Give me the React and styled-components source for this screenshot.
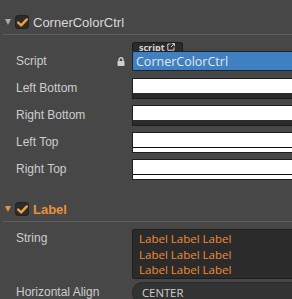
import React from 'react'
import styled, { createGlobalStyle } from 'styled-components'

const Global = createGlobalStyle`
  html, body {
    margin: 0;
    padding: 0;
    overflow: hidden;
    background: #474747;
  }
  body {
    font-family: "Liberation Sans", Arial, sans-serif;
  }
`

const Panel = styled.div`
  width: 100%;
  background: #474747;
`

const Header = styled.div`
  display: flex;
  align-items: center;
  box-sizing: border-box;
  height: 35px;
  padding: 10px 0 0 2px;
  margin-left: 3px;
  border-bottom: 1px solid #5d5d5d;
`

const Arrow = styled.span`
  width: 0;
  height: 0;
  border-left: 3.5px solid transparent;
  border-right: 3.5px solid transparent;
  border-top: 6px solid ${p => (p.$active ? '#e8913a' : '#a9a9a9')};
  margin: 0 4px 0 0;
`

const Check = styled.span`
  width: 14px;
  height: 14px;
  box-sizing: border-box;
  border-radius: 3px;
  background: #2b2b2b;
  border: 1px solid #232323;
  display: flex;
  align-items: center;
  justify-content: center;
`

const Title = styled.span`
  margin-left: 4px;
  font-size: 13px;
  color: ${p => (p.$active ? '#e8913a' : '#d8d8d8')};
  font-weight: ${p => (p.$active ? 'bold' : 'normal')};
`

const Props = styled.div`
  display: flex;
  flex-direction: column;
  padding-bottom: ${p => p.$pb || 0}px;
`

const Row = styled.div`
  display: flex;
  align-items: flex-start;
  padding-top: ${p => p.$pt ?? 4}px;
  padding-bottom: ${p => p.$pb ?? 3}px;
`

const Name = styled.div`
  width: 132px;
  flex-shrink: 0;
  box-sizing: border-box;
  padding-left: 16px;
  padding-right: 7px;
  display: flex;
  align-items: center;
  justify-content: space-between;
  font-size: 12px;
  color: #cdcdcd;
  height: ${p => p.$h || 20}px;
  margin-top: ${p => p.$mt || 0}px;
  white-space: nowrap;
`

const Value = styled.div`
  flex: 1;
  min-width: 0;
  display: flex;
  flex-direction: column;
`

const Tab = styled.div`
  align-self: flex-start;
  height: 9px;
  box-sizing: border-box;
  padding: 0 7px 0 6px;
  background: #2b2b2b;
  border: 1px solid #1c1c1c;
  border-bottom: none;
  border-radius: 3px 3px 0 0;
  display: flex;
  align-items: center;
  gap: 2px;
  font-size: 9px;
  font-weight: bold;
  line-height: 9px;
  color: #d8d8d8;
  font-family: "Open Sans", "Liberation Sans", sans-serif;
`

const AssetField = styled.div`
  height: 20px;
  box-sizing: border-box;
  background: #3f80c2;
  border: 1px solid #1b232c;
  border-right: none;
  border-radius: 2px 0 0 2px;
  display: flex;
  align-items: center;
  padding-left: 3px;
  font-family: "Open Sans", "Liberation Sans", sans-serif;
  font-size: 12.5px;
  color: #e6e6e6;
`

const ColorField = styled.div`
  height: 21px;
  box-sizing: border-box;
  border: 1px solid #1d1d1d;
  border-right: none;
  display: flex;
  flex-direction: column;
  background: #ffffff;
`

const Swatch = styled.div`
  flex: 1;
  background: ${p => p.$color};
`

const AlphaBar = styled.div`
  height: ${p => (p.$opaque ? 4 : 5)}px;
  background: ${p => (p.$opaque ? '#ffffff' : '#2b2b2b')};
  border-top: ${p => (p.$opaque ? '1px solid #111' : 'none')};
`

const TextArea = styled.div`
  box-sizing: border-box;
  background: #2b2b2b;
  border: 1px solid #1e1e1e;
  border-right: none;
  border-radius: 3px 0 0 3px;
  padding: 1px 0 0 6px;
  font-family: "Open Sans", "Liberation Sans", sans-serif;
  font-size: 11.5px;
  line-height: 15.5px;
  color: #f08b38;
`

const Select = styled.div`
  height: 21px;
  box-sizing: border-box;
  background: #333333;
  border: 1px solid #2c2c2c;
  border-right: none;
  border-radius: 10px 0 0 10px;
  padding-left: 9px;
  display: flex;
  align-items: center;
  font-family: "Open Sans", "Liberation Sans", sans-serif;
  font-size: 11.3px;
  color: #cfcfcf;
`

function CheckMark() {
  return (
    <svg width="11" height="9" viewBox="0 0 11 9">
      <path d="M1.2 4.6 L4.2 7.4 L9.8 1.4" fill="none" stroke="#f2a03a" strokeWidth="2.4" strokeLinecap="round" strokeLinejoin="round" />
    </svg>
  )
}

function Lock() {
  return (
    <svg width="8" height="9" viewBox="0 0 8 9">
      <path d="M2 4 V2.8 A2 2 0 0 1 6 2.8 V4" fill="none" stroke="#cfcfcf" strokeWidth="1.4" />
      <rect x="0.5" y="4" width="7" height="5" rx="0.8" fill="#cfcfcf" />
    </svg>
  )
}

function ExtLink() {
  return (
    <svg width="8" height="8" viewBox="0 0 8 8">
      <path d="M3.5 1 H0.8 V7.2 H7 V4.5" fill="none" stroke="#d0d0d0" strokeWidth="1" />
      <path d="M4 4 L7.3 0.7 M4.6 0.6 H7.4 V3.4" fill="none" stroke="#d0d0d0" strokeWidth="1" />
    </svg>
  )
}

function SectionHeader({ title, active }) {
  return (
    <Header>
      <Arrow $active={active} />
      <Check><CheckMark /></Check>
      <Title $active={active}>{title}</Title>
    </Header>
  )
}

const colors = [
  { name: 'Left Bottom', opaque: false },
  { name: 'Right Bottom', opaque: false },
  { name: 'Left Top', opaque: true },
  { name: 'Right Top', opaque: true },
]

export default function App() {
  return (
    <Panel>
      <Global />
      <SectionHeader title="CornerColorCtrl" />
      <Props $pb={5}>
        <Row $pt={7}>
          <Name $mt={9}>
            <span>Script</span>
            <Lock />
          </Name>
          <Value>
            <Tab>script<ExtLink /></Tab>
            <AssetField>CornerColorCtrl</AssetField>
          </Value>
        </Row>
        {colors.map(c => (
          <Row key={c.name} $pb={2}>
            <Name>{c.name}</Name>
            <Value>
              <ColorField>
                <Swatch $color="#ffffff" />
                <AlphaBar $opaque={c.opaque} />
              </ColorField>
            </Value>
          </Row>
        ))}
      </Props>
      <SectionHeader title="Label" active />
      <Props>
        <Row $pt={7} $pb={3}>
          <Name $h={18}>String</Name>
          <Value>
            <TextArea>
              <div>Label Label Label</div>
              <div>Label Label Label</div>
              <div>Label Label Label</div>
            </TextArea>
          </Value>
        </Row>
        <Row $pt={0}>
          <Name $h={21}>Horizontal Align</Name>
          <Value>
            <Select>CENTER</Select>
          </Value>
        </Row>
      </Props>
    </Panel>
  )
}
